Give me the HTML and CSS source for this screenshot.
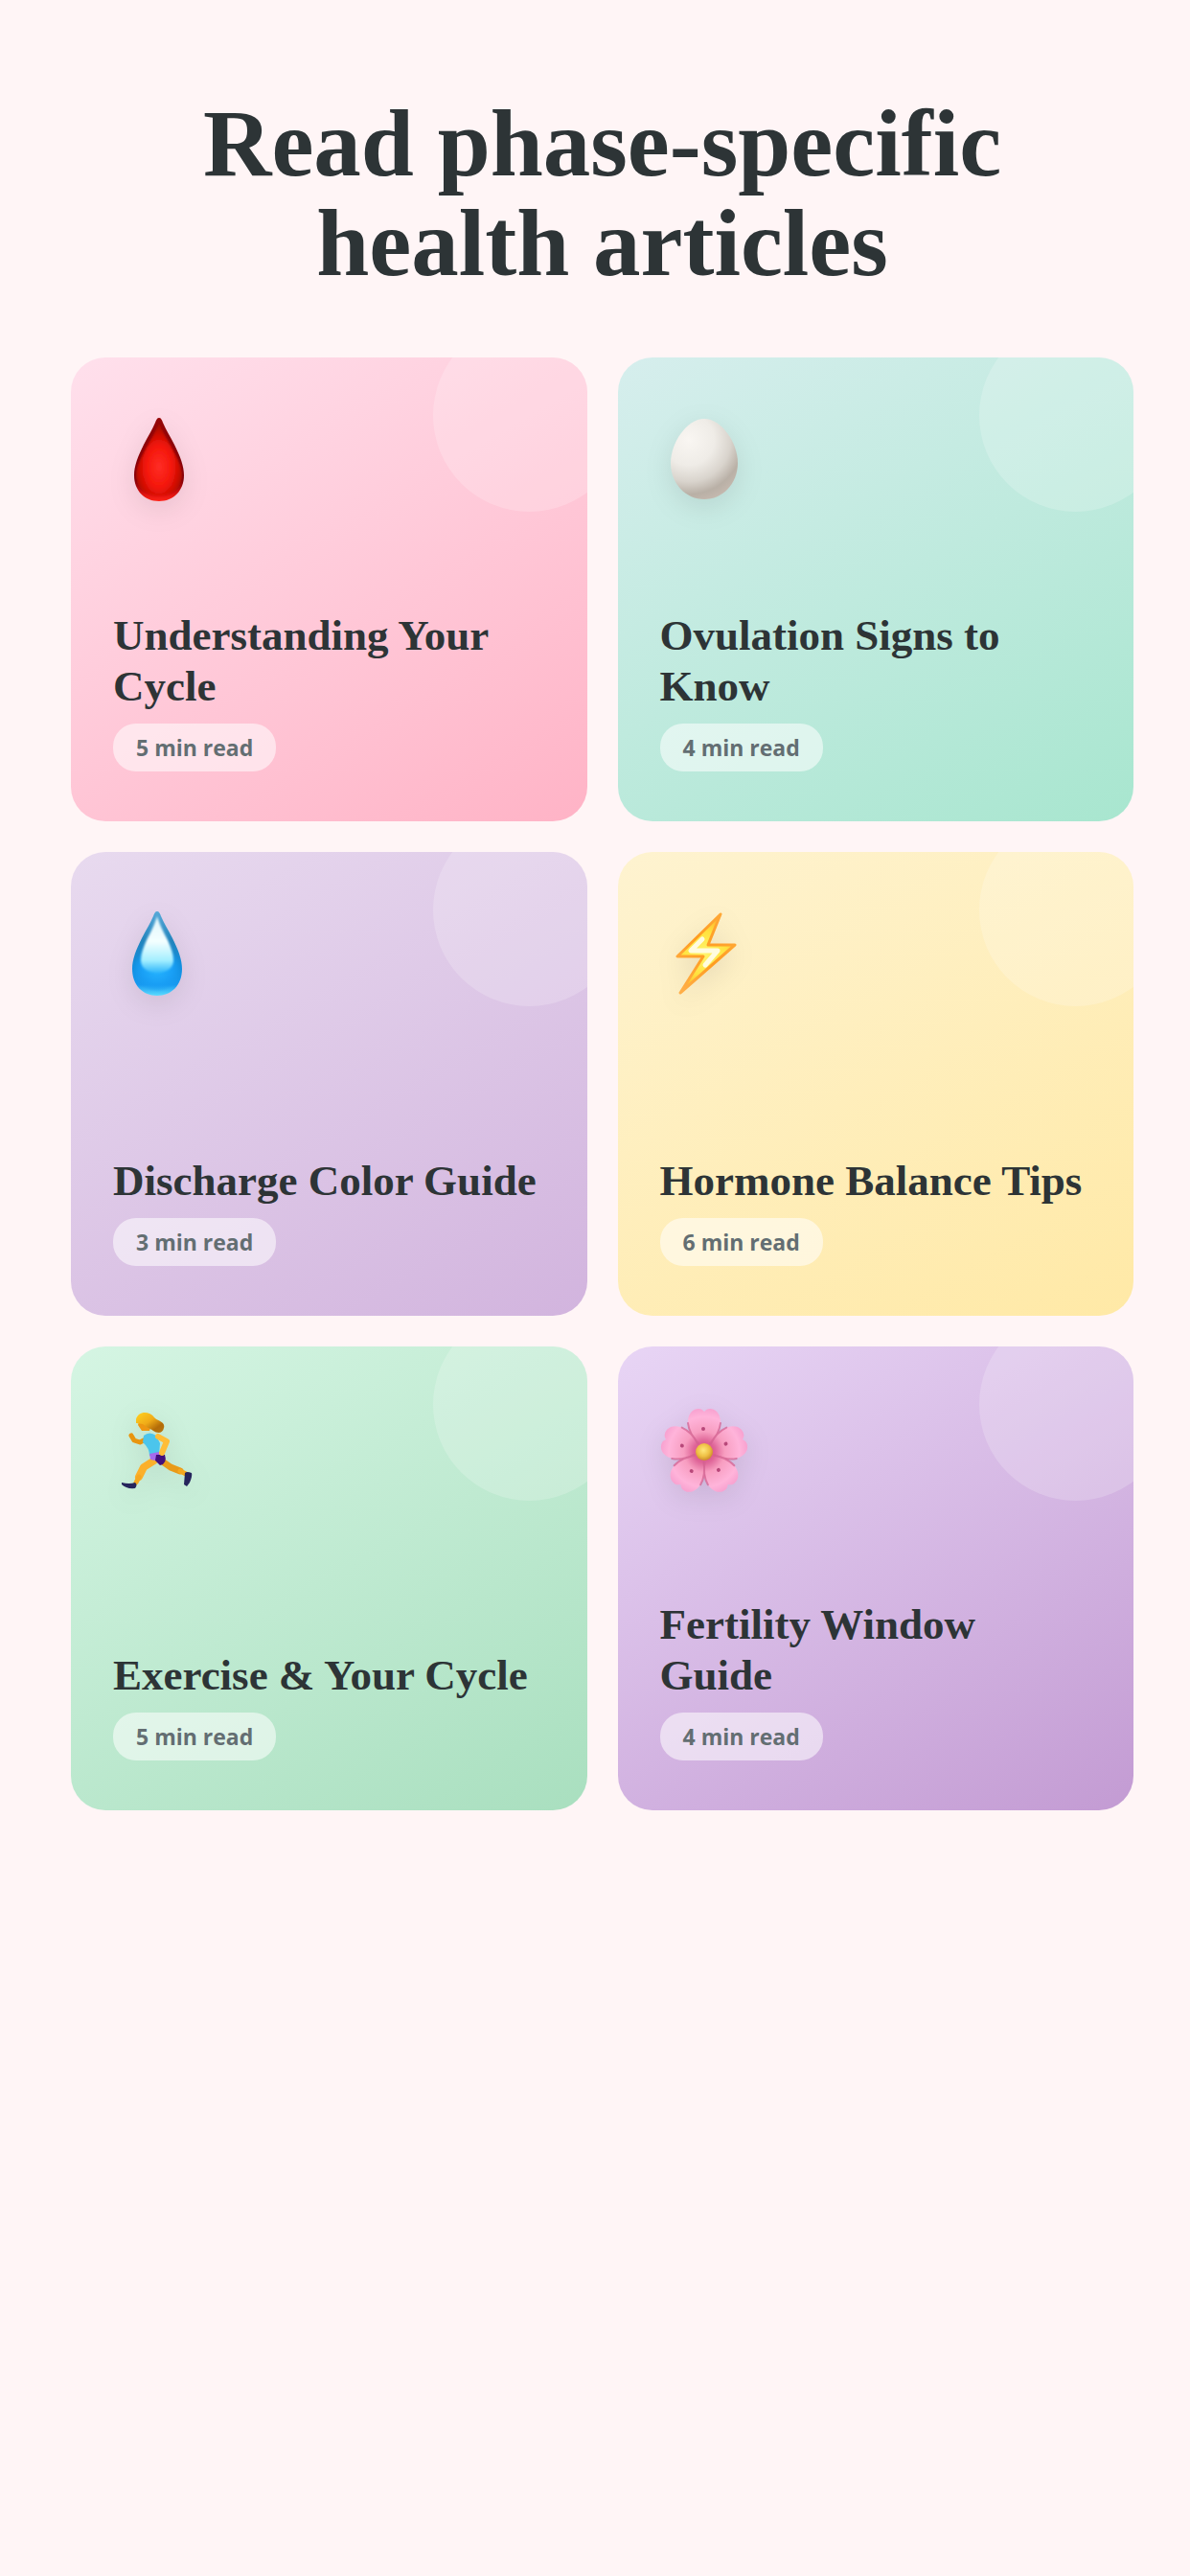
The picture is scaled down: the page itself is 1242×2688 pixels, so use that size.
FILE: index.html
```html
<!DOCTYPE html>
<html lang="en">
<head>
<meta charset="utf-8">
<meta name="viewport" content="width=device-width, initial-scale=1">
<title>Health articles</title>
<link rel="stylesheet" href="styles.css">
</head>
<body>
<main class="page">
  <h1 class="page-title">Read phase-specific health articles</h1>
  <div class="cards">
    <article class="card card-rose">
      <svg class="icon" viewBox="0 0 96 96" aria-hidden="true">
        <defs>
          <radialGradient id="blood" gradientUnits="userSpaceOnUse" cx="48" cy="54" r="44" gradientTransform="translate(48 0) scale(.62 1) translate(-48 0)">
            <stop offset="0" stop-color="#ff2d26"/><stop offset=".5" stop-color="#f4170b"/><stop offset=".75" stop-color="#cf0d03"/><stop offset="1" stop-color="#a00803"/>
          </radialGradient>
          <linearGradient id="bloodRim" x1="0" y1="0" x2="0" y2="1">
            <stop offset="0" stop-color="#960707"/><stop offset=".75" stop-color="#7d0009"/><stop offset=".92" stop-color="#e01510"/><stop offset="1" stop-color="#ff2218"/>
          </linearGradient>
          <filter id="softenRim" x="-.1" y="-.1" width="1.2" height="1.2"><feGaussianBlur stdDeviation="1"/></filter>
        </defs>
        <path fill="url(#bloodRim)" d="M48 3C50 3 51 5 52 8C55 15 60 23 64 31C70 43 74 53 74 63C74 79 63 90 48 90C33 90 22 79 22 63C22 53 26 43 32 31C36 23 41 15 44 8C45 5 46 3 48 3Z"/>
        <path fill="url(#blood)" filter="url(#softenRim)" d="M48 8C51 17 57 26 62 35C68 47 72 54 72 63C72 76 62 84 48 84C34 84 24 76 24 63C24 54 28 47 34 35C39 26 45 17 48 8Z"/>
      </svg>
      <h2 class="card-title">Understanding Your Cycle</h2>
      <span class="read-time">5 min read</span>
    </article>

    <article class="card card-mint">
      <svg class="icon" viewBox="0 0 96 96" aria-hidden="true">
        <defs>
          <radialGradient id="egg" gradientUnits="userSpaceOnUse" cx="30" cy="26" r="66">
            <stop offset="0" stop-color="#f9f6f2"/><stop offset=".4" stop-color="#efece7"/><stop offset=".66" stop-color="#d9d4cd"/><stop offset=".86" stop-color="#b9b0a6"/><stop offset="1" stop-color="#c4b8ae"/>
          </radialGradient>
        </defs>
        <path fill="url(#egg)" d="M46 4C64 4 81 29 81 50C81 72 65 88 46 88C27 88 11 72 11 50C11 29 28 4 46 4Z"/>
      </svg>
      <h2 class="card-title">Ovulation Signs to Know</h2>
      <span class="read-time">4 min read</span>
    </article>

    <article class="card card-lilac">
      <svg class="icon" viewBox="0 0 96 96" aria-hidden="true">
        <defs>
          <linearGradient id="water" x1="0" y1="0" x2="0" y2="1">
            <stop offset="0" stop-color="#57a9d8"/><stop offset=".35" stop-color="#2184bd"/><stop offset=".65" stop-color="#118fdf"/><stop offset=".87" stop-color="#1799f0"/><stop offset="1" stop-color="#5bdcff"/>
          </linearGradient>
          <radialGradient id="waterGlow" cx=".5" cy=".5" r=".5">
            <stop offset="0" stop-color="#26b4ff"/><stop offset=".65" stop-color="#199ff5"/><stop offset="1" stop-color="#199ff5" stop-opacity="0"/>
          </radialGradient>
          <linearGradient id="waterShine" x1="0" y1="0" x2="0" y2="1">
            <stop offset="0" stop-color="#dff5fb"/><stop offset=".45" stop-color="#f4ffff"/><stop offset=".78" stop-color="#a4efff"/><stop offset="1" stop-color="#2eb6fb"/>
          </linearGradient>
          <filter id="soften" x="-.1" y="-.1" width="1.2" height="1.2"><feGaussianBlur stdDeviation="1"/></filter>
        </defs>
        <path fill="url(#water)" d="M46 2C48 2 49 4 50 7C53 14 58 22 62 30C68 42 72 52 72 62C72 79 61 90 46 90C31 90 20 79 20 62C20 52 24 42 30 30C34 22 39 14 42 7C43 4 44 2 46 2Z"/>
        <ellipse cx="46" cy="62" rx="25" ry="24" fill="url(#waterGlow)"/>
        <path fill="url(#waterShine)" filter="url(#soften)" d="M46 7C49 17 53 24 57 32C60 39 63 46 63 53C63 61 56 66 46 66C36 66 29 61 29 53C29 46 32 39 35 32C39 24 43 17 46 7Z"/>
      </svg>
      <h2 class="card-title">Discharge Color Guide</h2>
      <span class="read-time">3 min read</span>
    </article>

    <article class="card card-butter">
      <svg class="icon" viewBox="0 0 96 96" aria-hidden="true">
        <defs>
          <linearGradient id="boltEdge" x1="1" y1="0" x2="0" y2="1">
            <stop offset="0" stop-color="#ffac3e"/><stop offset=".5" stop-color="#ff9c20"/><stop offset="1" stop-color="#ffb04c"/>
          </linearGradient>
          <radialGradient id="boltFill" gradientUnits="userSpaceOnUse" cx="46" cy="46" r="38">
            <stop offset="0" stop-color="#fff56d"/><stop offset=".6" stop-color="#ffe23e"/><stop offset="1" stop-color="#ffb72e"/>
          </radialGradient>
        </defs>
        <path fill="url(#boltFill)" stroke="url(#boltEdge)" stroke-width="3" stroke-linejoin="round" d="M63 5L18 49H45L21 87L78 37H50Z"/>
        <path fill="none" stroke="#fffce0" stroke-width="5" stroke-linejoin="round" stroke-linecap="round" d="M44 31L32 43H60L47 58"/>
      </svg>
      <h2 class="card-title">Hormone Balance Tips</h2>
      <span class="read-time">6 min read</span>
    </article>

    <article class="card card-green">
      <svg class="icon" viewBox="0 0 96 96" aria-hidden="true">
        <defs>
          <linearGradient id="hair" x1="0" y1="0" x2="1" y2="1">
            <stop offset="0" stop-color="#ffd321"/><stop offset=".45" stop-color="#f0ab18"/><stop offset=".75" stop-color="#b36c08"/><stop offset="1" stop-color="#b87810"/>
          </linearGradient>
        </defs>
        <g fill="none" stroke-linecap="round" stroke-linejoin="round">
          <path stroke="#e8950f" stroke-width="5" d="M34 37L28 40L22 38L19 33"/>
          <path stroke="#e99a18" stroke-width="7" d="M50 59L60 66L70 70"/>
          <path stroke="#fbb02b" stroke-width="8" d="M43 59L32 66L27 76"/>
          <path stroke="#f5a81f" stroke-width="5" d="M27 76L24 82M70 70L76 73"/>
        </g>
        <path fill="#26255c" d="M75 72Q77 70 82 72Q83 75 80 82L77 86L74 84ZM9 82Q17 84 23 82Q26 84 23 88Q14 89 9 84Z"/>
        <path fill="#4bc5ec" d="M32 33Q38 28 45 33L49 41L48 54L38 54Q38 46 31 40Z"/>
        <path fill="#a66bec" d="M38 52L48 50L49 60L39 58Z"/>
        <path fill="#42107c" d="M45 53L54 53Q57 62 49 64L44 59Z"/>
        <path fill="none" stroke="#ffbd37" stroke-width="6" stroke-linecap="round" stroke-linejoin="round" d="M47 34L56 39L51 51"/>
        <path fill="#ee9712" d="M27 18L41 20L38 28L30 28L26 22Z"/>
        <path fill="url(#hair)" d="M24 16C26 7 38 7 43 14C46 18 55 18 53 25C52 31 46 31 42 28C38 25 36 25 31 21L24 20Z"/>
      </svg>
      <h2 class="card-title">Exercise &amp; Your Cycle</h2>
      <span class="read-time">5 min read</span>
    </article>

    <article class="card card-violet">
      <svg class="icon" viewBox="0 0 96 96" aria-hidden="true">
        <defs>
          <radialGradient id="petal" gradientUnits="userSpaceOnUse" cx="46" cy="50" r="46">
            <stop offset="0" stop-color="#cf3c78"/><stop offset=".26" stop-color="#e0689a"/><stop offset=".46" stop-color="#f79dc0"/><stop offset=".8" stop-color="#ffb4da"/><stop offset="1" stop-color="#f7a0cf"/>
          </radialGradient>
          <radialGradient id="pollen" cx=".45" cy=".4" r=".6">
            <stop offset="0" stop-color="#ffe77c"/><stop offset=".6" stop-color="#efc044"/><stop offset="1" stop-color="#ce8d2c"/>
          </radialGradient>
          <g id="flowerPetal">
            <path fill="url(#petal)" d="M46 50C39 41 29 33 29 19C29 9 35 5 40 5C43 5 44 6 46 8C48 6 49 5 52 5C57 5 63 9 63 19C63 33 53 41 46 50Z"/>
            <path fill="none" stroke="#d0608f" stroke-opacity=".7" stroke-width="2" stroke-linecap="round" d="M40 41C34 35 30 29 29 20M52 41C58 35 62 29 63 20"/>
            <circle cx="45" cy="26" r="2" fill="#b8487a"/>
          </g>
        </defs>
        <use href="#flowerPetal"/>
        <use href="#flowerPetal" transform="rotate(72 46 50)"/>
        <use href="#flowerPetal" transform="rotate(144 46 50)"/>
        <use href="#flowerPetal" transform="rotate(216 46 50)"/>
        <use href="#flowerPetal" transform="rotate(288 46 50)"/>
        <circle cx="46" cy="50" r="9" fill="url(#pollen)"/>
      </svg>
      <h2 class="card-title">Fertility Window Guide</h2>
      <span class="read-time">4 min read</span>
    </article>
  </div>
</main>
</body>
</html>
```
FILE: styles.css
```css
* {
  box-sizing: border-box;
}

body {
  margin: 0;
  background: #fff5f6;
  color: #2d3436;
  font-family: "Liberation Serif", serif;
}

.page {
  padding: 98px 59px 96px 74px;
}

.page-title {
  max-width: 900px;
  margin: 0 auto 67px;
  font-size: 99px;
  line-height: 104px;
  font-weight: 700;
  text-align: center;
}

.cards {
  display: grid;
  grid-template-columns: repeat(2, minmax(0, 1fr));
  gap: 32px;
}

.card {
  position: relative;
  display: flex;
  flex-direction: column;
  align-items: flex-start;
  min-height: 484px;
  padding: 60px 44px 52px;
  border-radius: 36px;
  overflow: hidden;
}

/* pale disc in the corner of each card */
.card::before {
  content: "";
  position: absolute;
  top: -40px;
  right: -40px;
  width: 201px;
  height: 201px;
  border-radius: 50%;
  background: rgba(255, 255, 255, 0.2);
}

.card-rose { background: linear-gradient(150deg, #ffe0ec, #ffb3c6); }
.card-mint { background: linear-gradient(150deg, #d6eeed, #a8e6cf); }
.card-lilac { background: linear-gradient(150deg, #e8daef, #d2b4de); }
.card-butter { background: linear-gradient(150deg, #fef3d0, #ffe9a6); }
.card-green { background: linear-gradient(150deg, #d5f5e3, #a9dfbf); }
.card-violet { background: linear-gradient(150deg, #e8d5f5, #c39bd3); }

.icon {
  width: 96px;
  height: 96px;
  overflow: visible;
  filter: drop-shadow(0 8px 14px rgba(0, 0, 0, 0.09));
}

.card-title {
  margin: auto 0 12px;
  font-size: 45px;
  line-height: 53px;
  font-weight: 700;
}

.read-time {
  padding: 9px 24px;
  border-radius: 24px;
  background: rgba(255, 255, 255, 0.55);
  color: #636e72;
  font-family: "Open Sans", sans-serif;
  font-size: 23px;
  line-height: 32px;
  font-weight: 700;
}
```
